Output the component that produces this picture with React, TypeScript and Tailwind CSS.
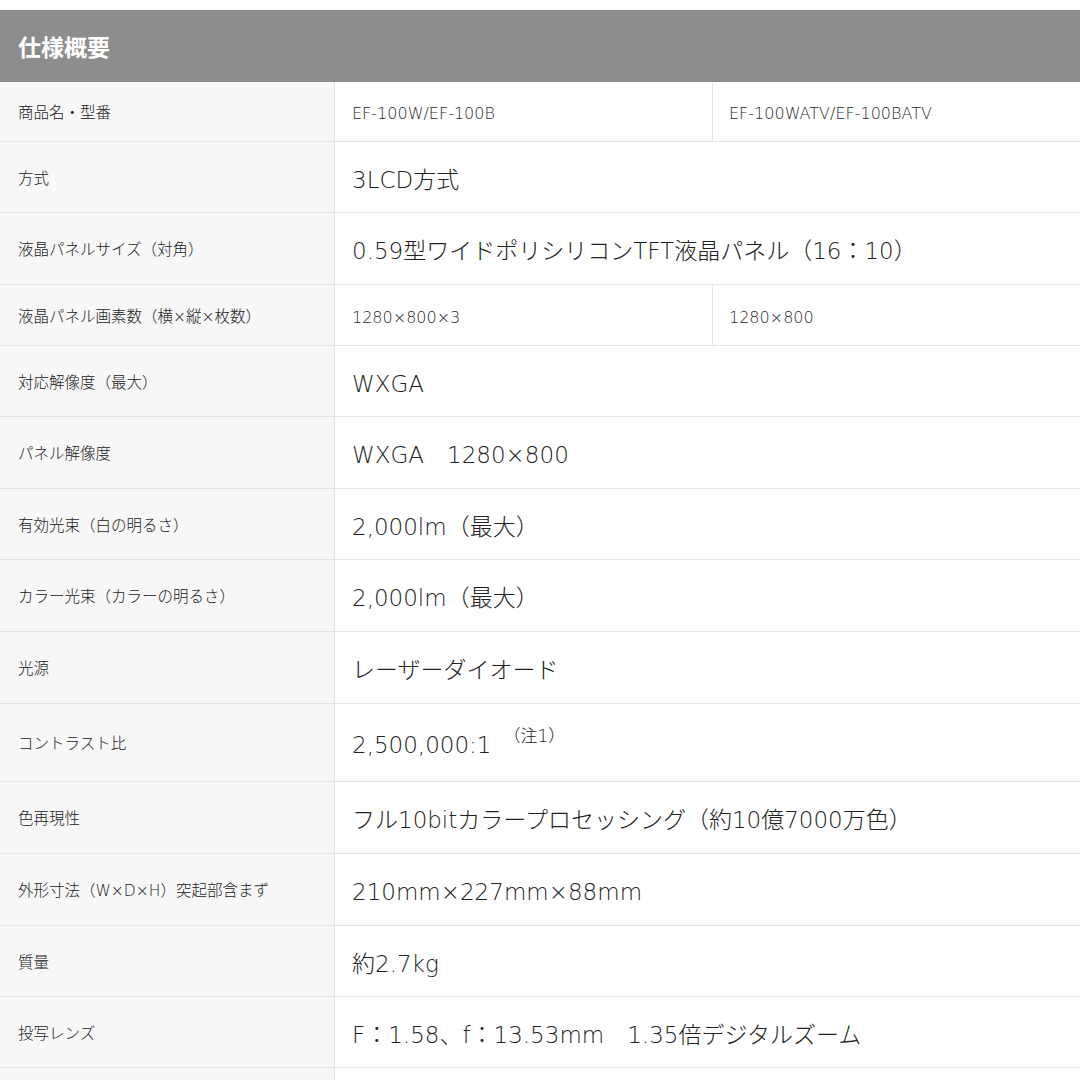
import React from "react";

type Row = {
  label: string;
  h: number;
  values?: [string, string];
  value?: string;
  note?: string;
};

const rows: Row[] = [
  { label: "商品名・型番", h: 60, values: ["EF-100W/EF-100B", "EF-100WATV/EF-100BATV"] },
  { label: "方式", h: 71, value: "3LCD方式" },
  { label: "液晶パネルサイズ（対角）", h: 72, value: "0.59型ワイドポリシリコンTFT液晶パネル（16：10）" },
  { label: "液晶パネル画素数（横×縦×枚数）", h: 61, values: ["1280×800×3", "1280×800"] },
  { label: "対応解像度（最大）", h: 71, value: "WXGA" },
  { label: "パネル解像度", h: 72, value: "WXGA　1280×800" },
  { label: "有効光束（白の明るさ）", h: 71, value: "2,000lm（最大）" },
  { label: "カラー光束（カラーの明るさ）", h: 72, value: "2,000lm（最大）" },
  { label: "光源", h: 72, value: "レーザーダイオード" },
  { label: "コントラスト比", h: 78, value: "2,500,000:1", note: "（注1）" },
  { label: "色再現性", h: 72, value: "フル10bitカラープロセッシング（約10億7000万色）" },
  { label: "外形寸法（W×D×H）突起部含まず", h: 72, value: "210mm×227mm×88mm" },
  { label: "質量", h: 71, value: "約2.7kg" },
  { label: "投写レンズ", h: 71, value: "F：1.58、f：13.53mm　1.35倍デジタルズーム" },
  { label: "", h: 71, value: "" },
];

export default function App() {
  return (
    <div
      className="w-[1080px] h-[1080px] overflow-hidden bg-white text-[#2e2e2e]"
      style={{ fontFamily: '"DejaVu Sans", "Noto Sans CJK JP", sans-serif' }}
    >
      <div className="h-[10px]" />
      <div className="h-[72px] bg-[#8d8d8d] flex items-center pl-[18px]">
        <span
          className="text-white text-[23px] font-bold"
          style={{ fontFamily: '"Noto Sans CJK JP", sans-serif' }}
        >
          仕様概要
        </span>
      </div>
      {rows.map((r, i) => (
        <div key={i} className="flex border-b border-[#e4e4e4]" style={{ height: r.h }}>
          <div className="w-[335px] shrink-0 bg-[#f7f7f7] border-r border-[#e4e4e4] flex items-center pl-[18px] pt-[5px] text-[15.5px] font-light text-[#222222]">
            {r.label}
          </div>
          {r.values ? (
            <>
              <div className="w-[378px] shrink-0 border-r border-[#e4e4e4] flex items-center pl-[17px] pt-[5px] text-[16px] font-light text-[#2a2a2a]">
                {r.values[0]}
              </div>
              <div className="flex-1 flex items-center pl-[16px] pt-[5px] text-[16px] font-light text-[#2a2a2a]">
                {r.values[1]}
              </div>
            </>
          ) : (
            <div className="flex-1 flex items-center pl-[17px] pt-[6px] text-[23px] font-light text-[#222222]">
              <span>{r.value}</span>
              {r.note && (
                <span className="text-[17px] relative -top-[9px] ml-[12px]">{r.note}</span>
              )}
            </div>
          )}
        </div>
      ))}
    </div>
  );
}
